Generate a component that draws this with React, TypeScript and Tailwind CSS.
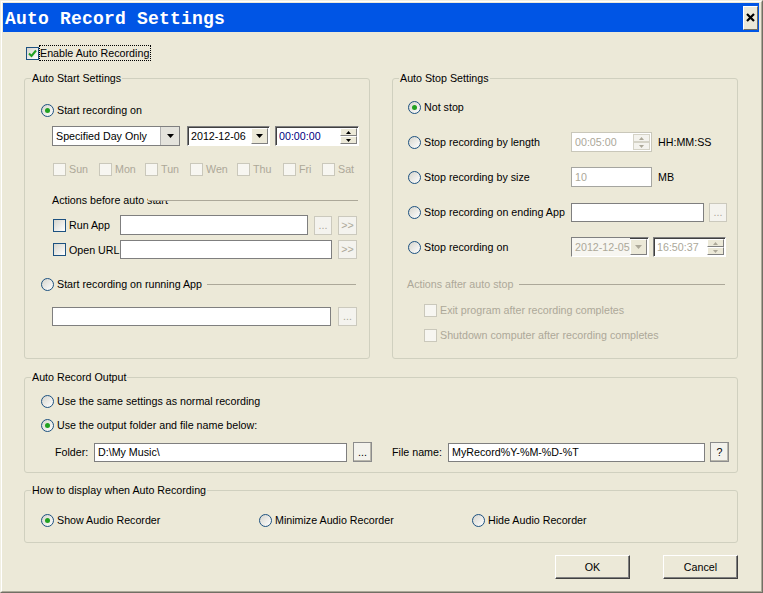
import React from "react";

type Kids = { children?: React.ReactNode };

const Down = ({ gray }: { gray?: boolean }) => (
  <svg width="7" height="4" viewBox="0 0 7 4">
    <polygon points="0,0 7,0 3.5,4" fill={gray ? "#ACA899" : "#000"} />
  </svg>
);

const Tiny = ({ up, gray }: { up?: boolean; gray?: boolean }) => (
  <svg width="5" height="3" viewBox="0 0 5 3">
    <polygon points={up ? "0,3 5,3 2.5,0" : "0,0 5,0 2.5,3"} fill={gray ? "#ACA899" : "#000"} />
  </svg>
);

function Group({ title, className = "", children }: Kids & { title: string; className?: string }) {
  return (
    <div className={`relative flex flex-col border border-[#D0D0BF] rounded-[3px] ${className}`}>
      <span className="absolute left-[6px] -top-[8px] px-[1px] bg-[#ECE9D8] leading-[14px]">{title}</span>
      {children}
    </div>
  );
}

function Radio({ checked, label, className = "" }: { checked?: boolean; label: string; className?: string }) {
  return (
    <div className={`flex items-center ${className}`}>
      <span className="w-[13px] h-[13px] shrink-0 rounded-full border border-[#1C5180] bg-linear-to-br from-[#D6D5CD] to-white flex items-center justify-center">
        {checked && <span className="w-[5px] h-[5px] rounded-full bg-[#21A121]" />}
      </span>
      <span className="ml-[3px] whitespace-nowrap">{label}</span>
    </div>
  );
}

function Check({ checked, disabled, label, className = "" }: { checked?: boolean; disabled?: boolean; label?: string; className?: string }) {
  return (
    <div className={`flex items-center ${className}`}>
      <span
        className={`w-[13px] h-[13px] shrink-0 border flex items-center justify-center ${
          disabled ? "border-[#CAC8BB] bg-[#F7F6F1]" : "border-[#1C5180] bg-linear-to-br from-[#D6D5CD] to-white"
        }`}
      >
        {checked && (
          <svg width="9" height="9" viewBox="0 0 9 9">
            <path d="M1 4.5 L3.5 7 L8 1.5" stroke="#21A121" strokeWidth="2" fill="none" />
          </svg>
        )}
      </span>
      {label && <span className={`ml-[3px] whitespace-nowrap ${disabled ? "text-[#ACA899]" : ""}`}>{label}</span>}
    </div>
  );
}

function TextBox({ value, disabled, className = "" }: { value?: string; disabled?: boolean; className?: string }) {
  return (
    <div
      className={`flex items-center bg-white border pl-[3px] whitespace-nowrap overflow-hidden ${
        disabled ? "border-[#A5A5A0] text-[#ACA899]" : "border-[#7F7F7F]"
      } ${className}`}
    >
      {value}
    </div>
  );
}

function SmallBtn({ disabled, className = "", children }: Kids & { disabled?: boolean; className?: string }) {
  return (
    <div
      className={`flex items-center justify-center border leading-none ${
        disabled
          ? "border-[#CBC9BD] bg-[#F4F3EE] text-[#ACA899]"
          : "border-[#8C8C8C] bg-[#F3F2EC] shadow-[inset_-1px_-1px_0_#B9B7AC]"
      } ${className}`}
    >
      {children}
    </div>
  );
}

function Raised({ className = "", children }: Kids & { className?: string }) {
  return (
    <div
      className={`flex items-center justify-center bg-[#ECE9D8] border border-t-white border-l-white border-r-[#808080] border-b-[#808080] ${className}`}
    >
      {children}
    </div>
  );
}

function DateBox({ value, disabled, className = "" }: { value: string; disabled?: boolean; className?: string }) {
  return (
    <div
      className={`flex h-[20px] bg-white border border-t-[#808080] border-l-[#808080] border-r-white border-b-white shadow-[inset_1px_1px_0_#404040] ${className}`}
    >
      <span className={`flex-1 min-w-0 overflow-hidden whitespace-nowrap pl-[3px] flex items-center ${disabled ? "text-[#ACA899] bg-[#F7F6F1]" : ""}`}>
        {value}
      </span>
      <Raised className="w-[17px] my-[1px] mr-[1px]">
        <Down gray={disabled} />
      </Raised>
    </div>
  );
}

function TimeBox({ value, disabled, className = "" }: { value: string; disabled?: boolean; className?: string }) {
  return (
    <div
      className={`flex h-[20px] bg-white border border-t-[#808080] border-l-[#808080] border-r-white border-b-white shadow-[inset_1px_1px_0_#404040] ${className}`}
    >
      <span className={`flex-1 min-w-0 overflow-hidden whitespace-nowrap pl-[3px] flex items-center ${disabled ? "text-[#ACA899]" : "text-[#000080]"}`}>
        {value}
      </span>
      <div className="w-[17px] flex flex-col my-[1px] mr-[1px]">
        <Raised className="flex-1">
          <Tiny up gray={disabled} />
        </Raised>
        <Raised className="flex-1">
          <Tiny gray={disabled} />
        </Raised>
      </div>
    </div>
  );
}

export default function App() {
  const days = [
    ["Sun", "w-[46px]"],
    ["Mon", "w-[46px]"],
    ["Tun", "w-[45px]"],
    ["Wen", "w-[47px]"],
    ["Thu", "w-[46px]"],
    ["Fri", "w-[39px]"],
    ["Sat", "w-[40px]"],
  ];

  return (
    <div className="w-[763px] h-[593px] bg-[#ECE9D8] font-['Liberation_Sans',Arial,sans-serif] text-[10.7px] leading-[14px] text-black overflow-hidden">
      <div className="h-full border border-t-[#F1EFE2] border-l-[#F1EFE2] border-r-[#716F64] border-b-[#716F64]">
        <div className="h-full flex flex-col border border-t-white border-l-white border-r-[#ACA899] border-b-[#ACA899] pt-[1px] pl-[1px] pr-[2px]">
          {/* title bar */}
          <div className="h-[29px] shrink-0 bg-[#0055E5] flex items-center justify-between pl-[2px] pr-[1px]">
            <span className="font-['Liberation_Mono',monospace] font-bold text-[18px] leading-none tracking-[0.2px] text-white pt-[2px]">
              Auto Record Settings
            </span>
            <div className="w-[15px] h-[24px] flex items-center justify-center bg-[#ECE9D8] border border-t-white border-l-white border-r-[#716F64] border-b-[#716F64]">
              <svg width="9" height="9" viewBox="0 0 9 9">
                <path d="M1 1 L8 8 M8 1 L1 8" stroke="#000" strokeWidth="2.2" />
              </svg>
            </div>
          </div>

          <div className="pl-[21px] flex flex-col">
            <div className="mt-[13px] h-[16px] flex items-center pl-[2px]">
              <Check checked />
              <span className="h-[16px] flex items-center border border-dotted border-black pr-[1px]">Enable Auto Recording</span>
            </div>

            <div className="mt-[17px] flex gap-[22px]">
              {/* Auto start */}
              <Group title="Auto Start Settings" className="w-[346px] h-[281px]">
                <Radio checked label="Start recording on" className="mt-[21px] h-[20px] ml-[16px]" />
                <div className="mt-[6px] h-[20px] ml-[27px] flex">
                  <div className="w-[128px] h-[20px] flex bg-white border border-[#7F7F7F]">
                    <span className="flex-1 pl-[3px] flex items-center whitespace-nowrap">Specified Day Only</span>
                    <div className="w-[19px] bg-[#E4E3DC] border-l border-[#B0B0B0] flex items-center justify-center">
                      <Down />
                    </div>
                  </div>
                  <DateBox value="2012-12-06" className="ml-[7px] w-[83px]" />
                  <TimeBox value="00:00:00" className="ml-[5px] w-[84px]" />
                </div>
                <div className="mt-[16px] h-[14px] ml-[28px] flex">
                  {days.map(([d, w]) => (
                    <Check key={d} disabled label={d} className={w} />
                  ))}
                </div>
                <div className="relative mt-[17px] h-[14px] ml-[27px] whitespace-nowrap">
                  <span>Actions before auto start</span>
                  <div className="absolute left-[96px] right-[11px] top-0 h-[8px] bg-[#ECE9D8] border-b border-[#ACA899]" />
                </div>
                <div className="mt-[8px] h-[20px] ml-[28px] flex items-center">
                  <Check label="Run App" className="w-[67px]" />
                  <TextBox className="w-[188px] h-[20px]" />
                  <SmallBtn disabled className="ml-[6px] w-[18px] h-[19px]">...</SmallBtn>
                  <SmallBtn disabled className="ml-[6px] w-[19px] h-[19px]">&gt;&gt;</SmallBtn>
                </div>
                <div className="mt-[5px] h-[19px] ml-[28px] flex items-center">
                  <Check label="Open URL" className="w-[67px]" />
                  <TextBox className="w-[212px] h-[19px]" />
                  <SmallBtn disabled className="ml-[6px] w-[19px] h-[19px]">&gt;&gt;</SmallBtn>
                </div>
                <div className="mt-[17px] h-[16px] ml-[16px] mr-[13px] flex items-center">
                  <Radio label="Start recording on running App" />
                  <div className="flex-1 ml-[5px] h-px bg-[#ACA899]" />
                </div>
                <div className="mt-[15px] h-[19px] ml-[27px] flex items-center">
                  <TextBox className="w-[279px] h-[19px]" />
                  <SmallBtn disabled className="ml-[7px] w-[19px] h-[19px]">...</SmallBtn>
                </div>
              </Group>

              {/* Auto stop */}
              <Group title="Auto Stop Settings" className="w-[346px] h-[281px]">
                <Radio checked label="Not stop" className="mt-[20px] h-[16px] ml-[15px]" />
                <div className="mt-[17px] h-[20px] ml-[15px] flex items-center">
                  <Radio label="Stop recording by length" className="w-[163px]" />
                  <div className="w-[81px] h-[20px] flex bg-white border border-[#C9C7BA]">
                    <span className="flex-1 pl-[3px] flex items-center text-[#ACA899]">00:05:00</span>
                    <div className="w-[17px] flex flex-col m-[1px]">
                      <div className="flex-1 flex items-center justify-center border border-[#D5D3C7] bg-[#F4F3EE]">
                        <Tiny up gray />
                      </div>
                      <div className="flex-1 flex items-center justify-center border border-[#D5D3C7] bg-[#F4F3EE]">
                        <Tiny gray />
                      </div>
                    </div>
                  </div>
                  <span className="ml-[6px]">HH:MM:SS</span>
                </div>
                <div className="mt-[15px] h-[20px] ml-[15px] flex items-center">
                  <Radio label="Stop recording by size" className="w-[163px]" />
                  <TextBox disabled value="10" className="w-[81px] h-[20px]" />
                  <span className="ml-[6px]">MB</span>
                </div>
                <div className="mt-[15px] h-[20px] ml-[15px] flex items-center">
                  <Radio label="Stop recording on ending App" className="w-[163px]" />
                  <TextBox className="w-[133px] h-[19px]" />
                  <SmallBtn disabled className="ml-[5px] w-[18px] h-[19px]">...</SmallBtn>
                </div>
                <div className="mt-[15px] h-[20px] ml-[15px] flex items-center">
                  <Radio label="Stop recording on" className="w-[163px]" />
                  <DateBox disabled value="2012-12-05" className="w-[78px]" />
                  <TimeBox disabled value="16:50:37" className="ml-[4px] w-[73px]" />
                </div>
                <div className="mt-[20px] h-[14px] ml-[14px] mr-[12px] flex items-center">
                  <span className="text-[#ACA899] whitespace-nowrap">Actions after auto stop</span>
                  <div className="flex-1 ml-[6px] h-px bg-[#ACA899]" />
                </div>
                <Check disabled label="Exit program after recording completes" className="mt-[12px] h-[14px] ml-[31px]" />
                <Check disabled label="Shutdown computer after recording completes" className="mt-[11px] h-[14px] ml-[31px]" />
              </Group>
            </div>

            {/* Output */}
            <Group title="Auto Record Output" className="mt-[18px] w-[714px] h-[96px]">
              <Radio label="Use the same settings as normal recording" className="mt-[15px] h-[16px] ml-[16px]" />
              <Radio checked label="Use the output folder and file name below:" className="mt-[8px] h-[16px] ml-[16px]" />
              <div className="mt-[9px] h-[20px] ml-[30px] flex items-center">
                <span className="w-[39px]">Folder:</span>
                <TextBox value="D:\My Music\" className="w-[253px] h-[19px]" />
                <SmallBtn className="ml-[6px] w-[19px] h-[20px]">...</SmallBtn>
                <span className="ml-[20px] w-[56px]">File name:</span>
                <TextBox value="MyRecord%Y-%M-%D-%T" className="w-[257px] h-[19px]" />
                <SmallBtn className="ml-[5px] w-[19px] h-[20px]">?</SmallBtn>
              </div>
            </Group>

            {/* Display */}
            <Group title="How to display when Auto Recording" className="mt-[17px] w-[714px] h-[53px]">
              <div className="mt-[21px] h-[16px] ml-[16px] flex items-center">
                <Radio checked label="Show Audio Recorder" className="w-[218px]" />
                <Radio label="Minimize Audio Recorder" className="w-[213px]" />
                <Radio label="Hide Audio Recorder" />
              </div>
            </Group>

            <div className="mt-[12px] w-[714px] flex justify-end gap-[33px]">
              <div className="w-[75px] h-[24px] flex items-center justify-center bg-[#ECE9D8] border border-t-white border-l-white border-r-[#404040] border-b-[#404040] shadow-[inset_-1px_-1px_0_#808080]">
                OK
              </div>
              <div className="w-[75px] h-[24px] flex items-center justify-center bg-[#ECE9D8] border border-t-white border-l-white border-r-[#404040] border-b-[#404040] shadow-[inset_-1px_-1px_0_#808080]">
                Cancel
              </div>
            </div>
          </div>
        </div>
      </div>
    </div>
  );
}
